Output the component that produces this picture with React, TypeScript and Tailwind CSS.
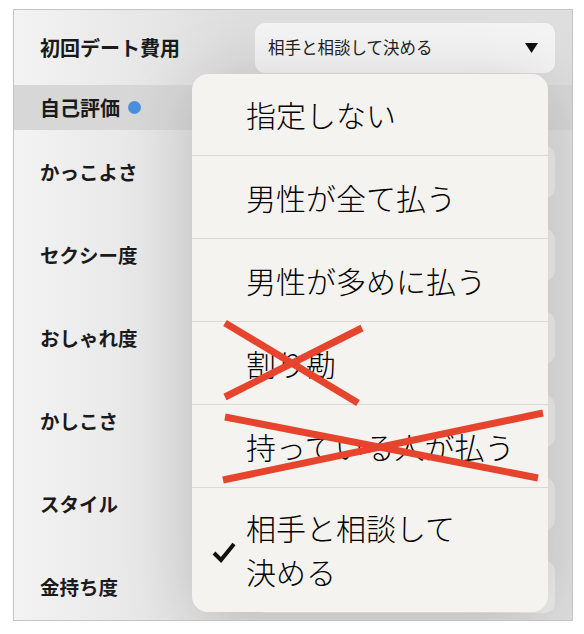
import React from 'react'

const jp = { fontFamily: '"Noto Sans CJK JP", "Noto Sans", sans-serif' }

const rows = ['かっこよさ', 'セクシー度', 'おしゃれ度', 'かしこさ', 'スタイル', '金持ち度']

const options = ['指定しない', '男性が全て払う', '男性が多めに払う', '割り勘', '持っている人が払う']

const App: React.FC = () => {
    return (
        <div className="relative w-[584px] h-[634px] bg-white pt-[9px] pl-[13px]" style={jp}>
            <div className="relative w-[560px] h-[612px] border border-[#c4c4c4] overflow-hidden bg-[linear-gradient(to_right,#f3f3f3,#e6e6e6_25%,#dedede_40%,#dedede)]">
                {/* first row with select */}
                <div className="flex items-center h-[75px] pl-[26px]">
                    <div className="w-[215px] text-[20px] font-bold text-[#1a1a1a]">初回デート費用</div>
                    <div className="flex items-center justify-between w-[300px] h-[50px] rounded-[10px] bg-[#f4f4f4] pl-[13px] pr-[17px]">
                        <span className="text-[16.5px] text-[#222]">相手と相談して決める</span>
                        <svg width="13" height="10" viewBox="0 0 13 10">
                            <path d="M0 0 L13 0 L6.5 10 Z" fill="#111" />
                        </svg>
                    </div>
                </div>

                {/* section header */}
                <div className="flex items-center gap-[8px] h-[45px] pl-[26px] bg-[#d7d7d7]">
                    <span className="text-[20px] font-bold text-[#1a1a1a]">自己評価</span>
                    <span className="w-[13px] h-[13px] rounded-full bg-[#4a90dc]"></span>
                </div>

                {rows.map((r) => (
                    <div key={r} className="flex items-center h-[83px] pl-[26px]">
                        <div className="w-[215px] text-[19.5px] font-bold text-[#1a1a1a]">{r}</div>
                        <div className="w-[300px] h-[52px] rounded-[10px] bg-[#ececec]"></div>
                    </div>
                ))}

                {/* dropdown menu */}
                <div className="absolute left-[178px] top-[64px] w-[356px] rounded-[16px] bg-[#f4f3f0] shadow-[0_8px_70px_rgba(0,0,0,0.16)] overflow-hidden">
                    {options.map((o, i) => (
                        <div
                            key={o}
                            className={
                                i === 0
                                    ? 'flex items-center h-[82px] pl-[54px] border-b border-[#d9d9d7] text-[30px] font-light text-black'
                                    : 'flex items-center h-[83px] pl-[54px] border-b border-[#d9d9d7] text-[30px] font-light text-black'
                            }
                        >
                            {o}
                        </div>
                    ))}
                    <div className="flex items-center h-[124px] pl-[20px] pb-[2px]">
                        <svg width="24" height="22" viewBox="0 0 24 22" className="mr-[10px] mt-[6px]">
                            <path d="M2 12 L9 19 L22 3" fill="none" stroke="#111" strokeWidth="4" />
                        </svg>
                        <div className="text-[30px] leading-[44px] font-light text-black">
                            相手と相談して
                            <br />
                            決める
                        </div>
                    </div>
                </div>
            </div>

            {/* red crosses */}
            <svg className="absolute inset-0 pointer-events-none" width="584" height="634" viewBox="0 0 584 634">
                <g stroke="#e7442d" strokeWidth="7">
                    <line x1="225" y1="323" x2="358" y2="403" />
                    <line x1="225" y1="397" x2="362" y2="328" />
                    <line x1="225" y1="417" x2="538" y2="478" />
                    <line x1="223" y1="480" x2="543" y2="413" />
                </g>
            </svg>
        </div>
    )
}

export default App
